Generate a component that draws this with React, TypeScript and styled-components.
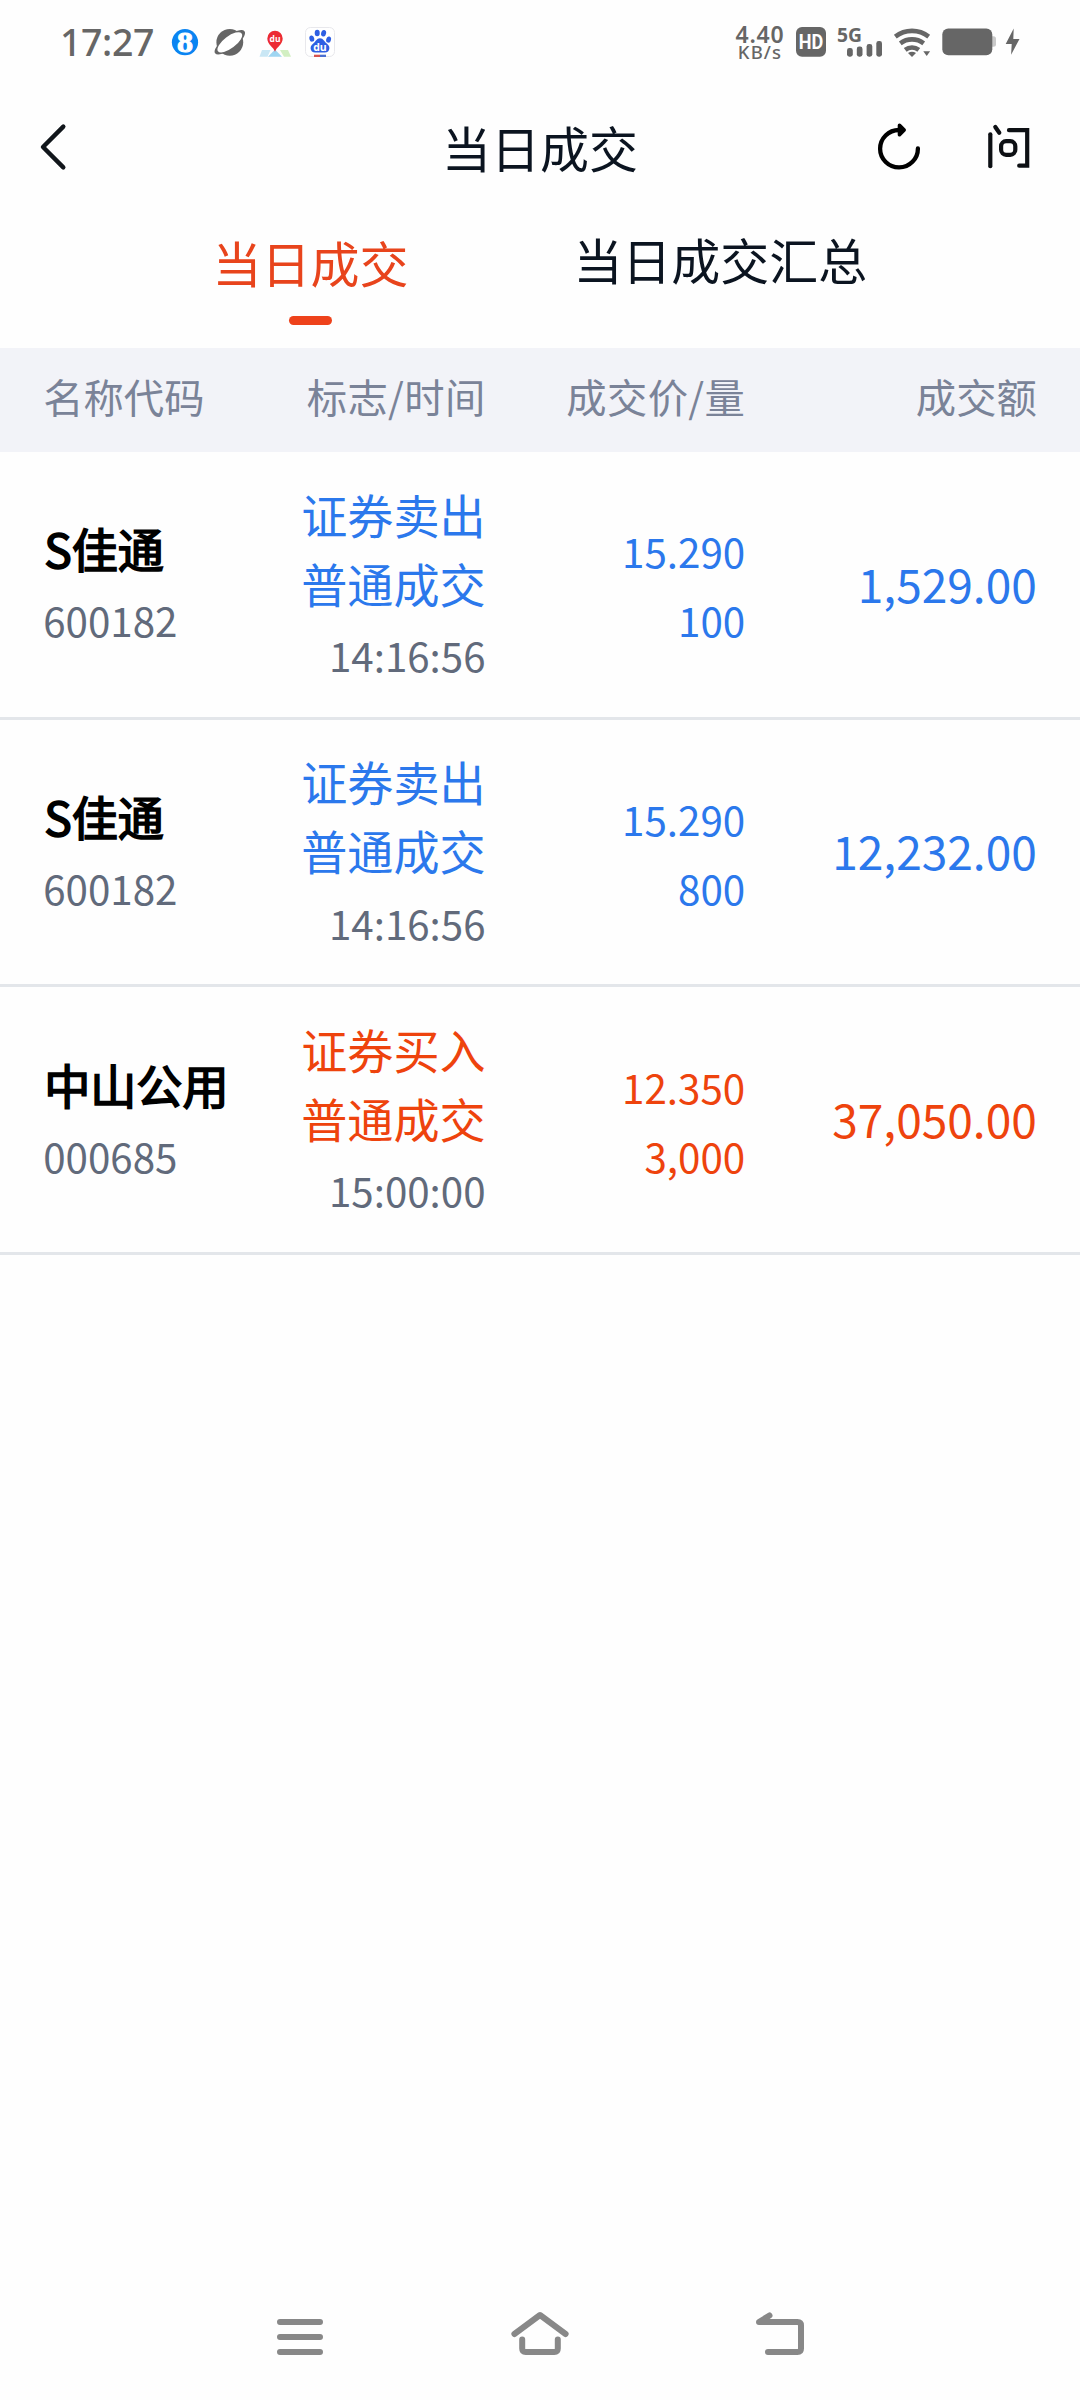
import React from "react";
import styled, { createGlobalStyle } from "styled-components";

const GlobalStyle = createGlobalStyle`
  html, body { margin: 0; padding: 0; background: #fefefe; }
  * { box-sizing: border-box; }
`;

const cjk = `"Noto Sans CJK SC", "Noto Sans", sans-serif`;

const palette = {
  ink: "#0b1420",
  accent: "#e8441c",
  muted: "#7a8398",
  code: "#616a7b",
  sell: "#2b78ec",
  buy: "#ee430d",
  system: "#666666",
};

const Screen = styled.div`
  width: 1080px;
  height: 2400px;
  display: flex;
  flex-direction: column;
  background: #fefefe;
  font-family: ${cjk};
  color: ${palette.ink};
  overflow: hidden;
`;

/* ---------- status bar ---------- */

const StatusBar = styled.div`
  height: 84px;
  padding: 0 60px 0 59px;
  display: flex;
  justify-content: space-between;
  color: ${palette.system};
  font-family: "Noto Sans", sans-serif;
  font-weight: 600;
`;

const StatusGroup = styled.div`
  display: flex;
  align-items: center;
  height: 84px;
`;

const Clock = styled.span`
  width: 97px;
  padding-left: 1px;
  font-size: 37.5px;
  font-weight: 550;
  letter-spacing: -0.4px;
  line-height: 84px;
  height: 84px;
`;

const AppIcons = styled.div`
  display: flex;
  align-items: center;
  gap: 14px;
  margin-left: 15px;
`;

const StatusIcons = styled.div`
  display: flex;
  align-items: center;
  gap: 11px;
`;

const Speed = styled.div`
  display: flex;
  flex-direction: column;
  align-items: center;
  width: 50px;
  margin-right: 11px;
`;

const SpeedValue = styled.span`
  font-size: 23px;
  line-height: 18px;
  letter-spacing: 0.8px;
`;

const SpeedUnit = styled.span`
  font-size: 18.5px;
  font-weight: 500;
  line-height: 17px;
  letter-spacing: 1.1px;
`;

const Icon = styled.svg`
  display: block;
  flex: none;
  overflow: visible;
`;

const TightIcon = styled(Icon)`
  margin-left: -2px;
`;

/* ---------- title bar ---------- */

const TitleBar = styled.header`
  height: 125px;
  display: grid;
  grid-template-columns: 1fr auto 1fr;
  align-items: center;
  padding: 0 38px 0 38px;
`;

const Title = styled.h1`
  margin: 0;
  font-size: 48.96px;
  line-height: 72px;
  font-weight: 400;
`;

const Actions = styled.div`
  display: flex;
  justify-content: flex-end;
  gap: 66px;
  padding-right: 10px;
`;

/* ---------- tabs ---------- */

const Tabs = styled.nav`
  height: 139px;
  display: flex;
  justify-content: flex-start;
  gap: 165px;
  padding: 14px 0 0 212.6px;
`;

const Tab = styled.div<{ $active?: boolean }>`
  display: flex;
  flex-direction: column;
  align-items: center;
  padding-top: ${(p) => (p.$active ? 2.5 : 0)}px;
  font-size: 48.96px;
  line-height: 72px;
  color: ${(p) => (p.$active ? palette.accent : palette.ink)};
`;

const TabMark = styled.i`
  width: 43px;
  height: 9px;
  margin-top: 18.5px;
  border-radius: 5px;
  background: #ee421b;
`;

/* ---------- table ---------- */

const columns = `grid-template-columns: 240px 202.4px 259.6px 1fr;`;

const TableHead = styled.div`
  height: 104px;
  display: grid;
  ${columns}
  align-items: start;
  padding: 18px 43.2px 0;
  background: #f2f3f8;
  color: ${palette.muted};
  font-size: 40.32px;
  line-height: 60px;
`;

const HeadCell = styled.div<{ $start?: boolean; $spaced?: boolean }>`
  text-align: ${(p) => (p.$start ? "left" : "right")};
  letter-spacing: ${(p) => (p.$spaced ? "0.35px" : "normal")};
  white-space: nowrap;
`;

const Rows = styled.main`
  flex: 1;
  margin-top: -0.2px;
`;

const Row = styled.div`
  height: 267.8px;
  display: grid;
  ${columns}
  align-items: center;
  padding: 0 43.2px 2px;
  border-bottom: 3px solid #e3e6ea;
  font-size: 46.08px;
  line-height: 69.12px;
`;

const Cell = styled.div<{ $start?: boolean; $tone?: string }>`
  display: flex;
  flex-direction: column;
  text-align: ${(p) => (p.$start ? "left" : "right")};
  color: ${(p) => p.$tone ?? palette.ink};
  white-space: nowrap;
`;

const Line = styled.div`
  height: 69.12px;
`;

const Name = styled.div`
  height: 69.12px;
  padding-left: 1px;
  color: #000;
  font-weight: 400;
  -webkit-text-stroke: 1.7px #000;
`;

const Small = styled.span<{ $tone?: string }>`
  font-size: 40.32px;
  color: ${(p) => p.$tone ?? "inherit"};
`;

/* ---------- system navigation ---------- */

const SystemNav = styled.footer`
  height: 126px;
  display: flex;
  align-items: center;
  justify-content: space-between;
  padding: 0 270px 0 270px;
`;

type Trade = {
  name: string;
  code: string;
  side: "sell" | "buy";
  flag: string;
  time: string;
  price: string;
  volume: string;
  amount: string;
};

const trades: Trade[] = [
  { name: "S佳通", code: "600182", side: "sell", flag: "证券卖出", time: "14:16:56", price: "15.290", volume: "100", amount: "1,529.00" },
  { name: "S佳通", code: "600182", side: "sell", flag: "证券卖出", time: "14:16:56", price: "15.290", volume: "800", amount: "12,232.00" },
  { name: "中山公用", code: "000685", side: "buy", flag: "证券买入", time: "15:00:00", price: "12.350", volume: "3,000", amount: "37,050.00" },
];

const EightIcon = () => (
  <Icon width="28" height="30" viewBox="171 27 28 30">
    <circle cx="185" cy="42.2" r="13.1" fill="#0a84f2" />
    <text x="185" y="52" textAnchor="middle" fontFamily="Liberation Serif, serif" fontWeight="700" fontSize="29" fill="#fff" stroke="#fff" strokeWidth="1" textLength="16" lengthAdjust="spacingAndGlyphs">8</text>
  </Icon>
);

const PlanetIcon = () => (
  <Icon width="32" height="30" viewBox="213 27 32 30">
    <circle cx="229.8" cy="42.3" r="13.4" fill="#666" />
    <g transform="rotate(-37 229.8 42.3)">
      <ellipse cx="229.8" cy="42.3" rx="18.4" ry="6.6" fill="#666" />
      <ellipse cx="229.8" cy="42.3" rx="14.8" ry="6" fill="#fff" />
    </g>
  </Icon>
);

const MapIcon = () => (
  <Icon width="32" height="30" viewBox="259 27 32 30">
    <path d="M262 50h8.500l-3 6.700h-8z" fill="#c9e7f5" />
    <path d="M275 49.500l7 7.200h-14z" fill="#9fd6f2" />
    <path d="M280 50h8l3 6.700h-7z" fill="#d2efc2" />
    <path d="M275 51.800c-1.300-4.600-7.700-7.300-7.700-13.300a7.700 7.700 0 0 1 15.400 0c0 6-6.400 8.700-7.700 13.300z" fill="#ec2b33" />
    <text x="275" y="41.500" textAnchor="middle" fontFamily="Open Sans, sans-serif" fontWeight="700" fontSize="8.500" fill="#fff">du</text>
  </Icon>
);

const BaiduIcon = () => (
  <Icon width="30" height="30" viewBox="305 27 30 30">
    <rect x="305.500" y="27.500" width="29" height="29" rx="5" fill="#fff" stroke="#e8e8ec" />
    <g fill="#2e5fe3">
      <ellipse cx="317.200" cy="33" rx="2.500" ry="3.300" />
      <ellipse cx="323.600" cy="33.300" rx="2.500" ry="3.300" transform="rotate(12 323.600 33.300)" />
      <ellipse cx="311.800" cy="38.600" rx="2.400" ry="3.100" transform="rotate(-14 311.800 38.600)" />
      <ellipse cx="328.600" cy="39.600" rx="2.400" ry="3.100" transform="rotate(14 328.600 39.600)" />
      <path d="M320 38.200c3.300 0 4.400 3.300 6.700 5.300 2.500 2 3.300 4 2.300 6.400-1.200 3-4.500 2.600-9 2.600s-7.800.4-9-2.600c-1-2.400-.2-4.400 2.300-6.400 2.300-2 3.400-5.300 6.700-5.300z" />
    </g>
    <text x="320" y="51" textAnchor="middle" fontFamily="Open Sans, sans-serif" fontWeight="700" fontSize="10.500" fill="#fff">du</text>
    <rect x="314" y="54.700" width="6" height="2.300" fill="#d65350" />
    <rect x="320" y="54.700" width="6" height="2.300" fill="#4a6fd0" />
  </Icon>
);

const HdIcon = () => (
  <Icon width="30" height="30" viewBox="795 27 30 30">
    <rect x="795" y="27" width="30" height="29.700" rx="6" fill="#666" />
    <text x="797.800" y="49.200" fontFamily="Roboto, sans-serif" fontWeight="700" fontSize="20" fill="#fff" textLength="24.500" lengthAdjust="spacingAndGlyphs">HD</text>
  </Icon>
);

const SignalIcon = () => (
  <Icon width="46" height="30" viewBox="836 27 46 30">
    <text x="836" y="42" fontFamily="Noto Sans, sans-serif" fontWeight="700" fontSize="20" fill="#666" textLength="25" lengthAdjust="spacingAndGlyphs">5G</text>
    <g fill="#666">
      <rect x="846" y="48" width="5.800" height="8.700" rx="2.400" />
      <rect x="855.800" y="46.500" width="5.700" height="10.200" rx="2.400" />
      <rect x="865.600" y="44" width="5.700" height="12.700" rx="2.400" />
      <rect x="875.300" y="41" width="5.700" height="15.700" rx="2.400" />
    </g>
  </Icon>
);

const WifiIcon = () => (
  <Icon width="37" height="30" viewBox="894 27 37 30">
    <g fill="none" stroke="#666" strokeWidth="4.600">
      <path d="M895.300 36.600q7.400-5.700 16.700-5.700t16.700 5.700" />
      <path d="M900.300 43.300q5.200-3.900 11.700-3.900t11.700 3.900" />
      <path d="M905.200 49.800q3-2.300 6.800-2.300t6.800 2.300" />
    </g>
    <path d="M908 53q4-2.600 8 0l-4 4z" fill="#666" />
    <path d="M923.300 51.300h6.800l-3.400 4.700z" fill="#666" />
  </Icon>
);

const BatteryIcon = () => (
  <Icon width="54" height="30" viewBox="942 28.500 54 30">
    <path d="M991 37.700h2.500a2.500 2.500 0 0 1 2.500 2.500v5.600a2.500 2.500 0 0 1-2.500 2.500h-2.500z" fill="#c9c9c9" />
    <rect x="942.300" y="30" width="50" height="26.700" rx="6" fill="#666" />
  </Icon>
);

const BoltIcon = () => (
  <TightIcon width="15" height="30" viewBox="1005 28.500 15 30">
    <path d="M1013.700 30l-8 15.600h6l-.6 10.700 8.400-15.900h-6.200z" fill="#666" />
  </TightIcon>
);

const BackChevron = () => (
  <Icon width="30" height="50" viewBox="38 122 30 50">
    <path d="M63.300 126.600L43 147l20.300 20.400" fill="none" stroke="#11161b" strokeWidth="4.400" strokeLinecap="round" strokeLinejoin="round" />
  </Icon>
);

const RefreshIcon = () => (
  <Icon width="44" height="50" viewBox="878 122 44 50">
    <path d="M902 130h-3a18.900 18.700 0 1 0 18.900 18.500" fill="none" stroke="#000" strokeWidth="4.300" strokeLinecap="round" />
    <path d="M899.500 125.200l4.700 4.800-4.700 4.700z" fill="#000" stroke="#000" strokeWidth="3.600" strokeLinejoin="round" />
  </Icon>
);

const AskIcon = () => (
  <Icon width="44" height="50" viewBox="988 122 44 50">
    <g fill="none" stroke="#0d1014" strokeWidth="4.200" strokeLinecap="round" strokeLinejoin="round">
      <path d="M990.300 134.300v31.900" />
      <path d="M995.300 127l4 5.700" />
      <path d="M1009 130.200h18.200v35.500h-8" strokeLinejoin="miter" />
      <rect x="1001.100" y="141.200" width="14.200" height="13.600" rx="5" />
    </g>
  </Icon>
);

const MenuIcon = () => (
  <Icon width="60" height="50" viewBox="270 2312 60 50">
    <path d="M280 2322h40M280 2337h40M280 2352h40" stroke="#888" strokeWidth="6" strokeLinecap="round" />
  </Icon>
);

const HomeIcon = () => (
  <Icon width="60" height="50" viewBox="510 2312 60 50">
    <path d="M514.400 2334l25.600-19 25.600 19M522.200 2339.500v9q0 3.500 3.500 3.500h28.600q3.500 0 3.500-3.500v-9" fill="none" stroke="#888" strokeWidth="6" strokeLinecap="round" strokeLinejoin="round" />
  </Icon>
);

const ReturnIcon = () => (
  <Icon width="60" height="50" viewBox="750 2312 60 50">
    <path d="M768 2352h29.500q3.500 0 3.500-3.500v-23q0-3.500-3.500-3.500h-38.500l10.500-6.500" fill="none" stroke="#888" strokeWidth="6" strokeLinecap="round" strokeLinejoin="round" />
    <path d="M759 2322l10.500-6.500v6.500z" fill="#888" />
  </Icon>
);

const TradeRow = ({ trade }: { trade: Trade }) => {
  const tone = trade.side === "sell" ? palette.sell : palette.buy;
  return (
    <Row>
      <Cell $start>
        <Name>{trade.name}</Name>
        <Line><Small $tone={palette.code}>{trade.code}</Small></Line>
      </Cell>
      <Cell $tone={tone}>
        <Line>{trade.flag}</Line>
        <Line>普通成交</Line>
        <Line><Small $tone={palette.code}>{trade.time}</Small></Line>
      </Cell>
      <Cell $tone={tone}>
        <Line><Small>{trade.price}</Small></Line>
        <Line><Small>{trade.volume}</Small></Line>
      </Cell>
      <Cell $tone={tone}>
        <Line>{trade.amount}</Line>
      </Cell>
    </Row>
  );
};

export default function App() {
  return (
    <Screen>
      <GlobalStyle />
      <StatusBar>
        <StatusGroup>
          <Clock>17:27</Clock>
          <AppIcons>
            <EightIcon />
            <PlanetIcon />
            <MapIcon />
            <BaiduIcon />
          </AppIcons>
        </StatusGroup>
        <StatusGroup>
          <Speed>
            <SpeedValue>4.40</SpeedValue>
            <SpeedUnit>KB/s</SpeedUnit>
          </Speed>
          <StatusIcons>
            <HdIcon />
            <SignalIcon />
            <WifiIcon />
            <BatteryIcon />
            <BoltIcon />
          </StatusIcons>
        </StatusGroup>
      </StatusBar>
      <TitleBar>
        <BackChevron />
        <Title>当日成交</Title>
        <Actions>
          <RefreshIcon />
          <AskIcon />
        </Actions>
      </TitleBar>
      <Tabs>
        <Tab $active>
          当日成交
          <TabMark />
        </Tab>
        <Tab>当日成交汇总</Tab>
      </Tabs>
      <TableHead>
        <HeadCell $start>名称代码</HeadCell>
        <HeadCell $spaced>标志/时间</HeadCell>
        <HeadCell $spaced>成交价/量</HeadCell>
        <HeadCell>成交额</HeadCell>
      </TableHead>
      <Rows>
        {trades.map((t, i) => (
          <TradeRow key={i} trade={t} />
        ))}
      </Rows>
      <SystemNav>
        <MenuIcon />
        <HomeIcon />
        <ReturnIcon />
      </SystemNav>
    </Screen>
  );
}
